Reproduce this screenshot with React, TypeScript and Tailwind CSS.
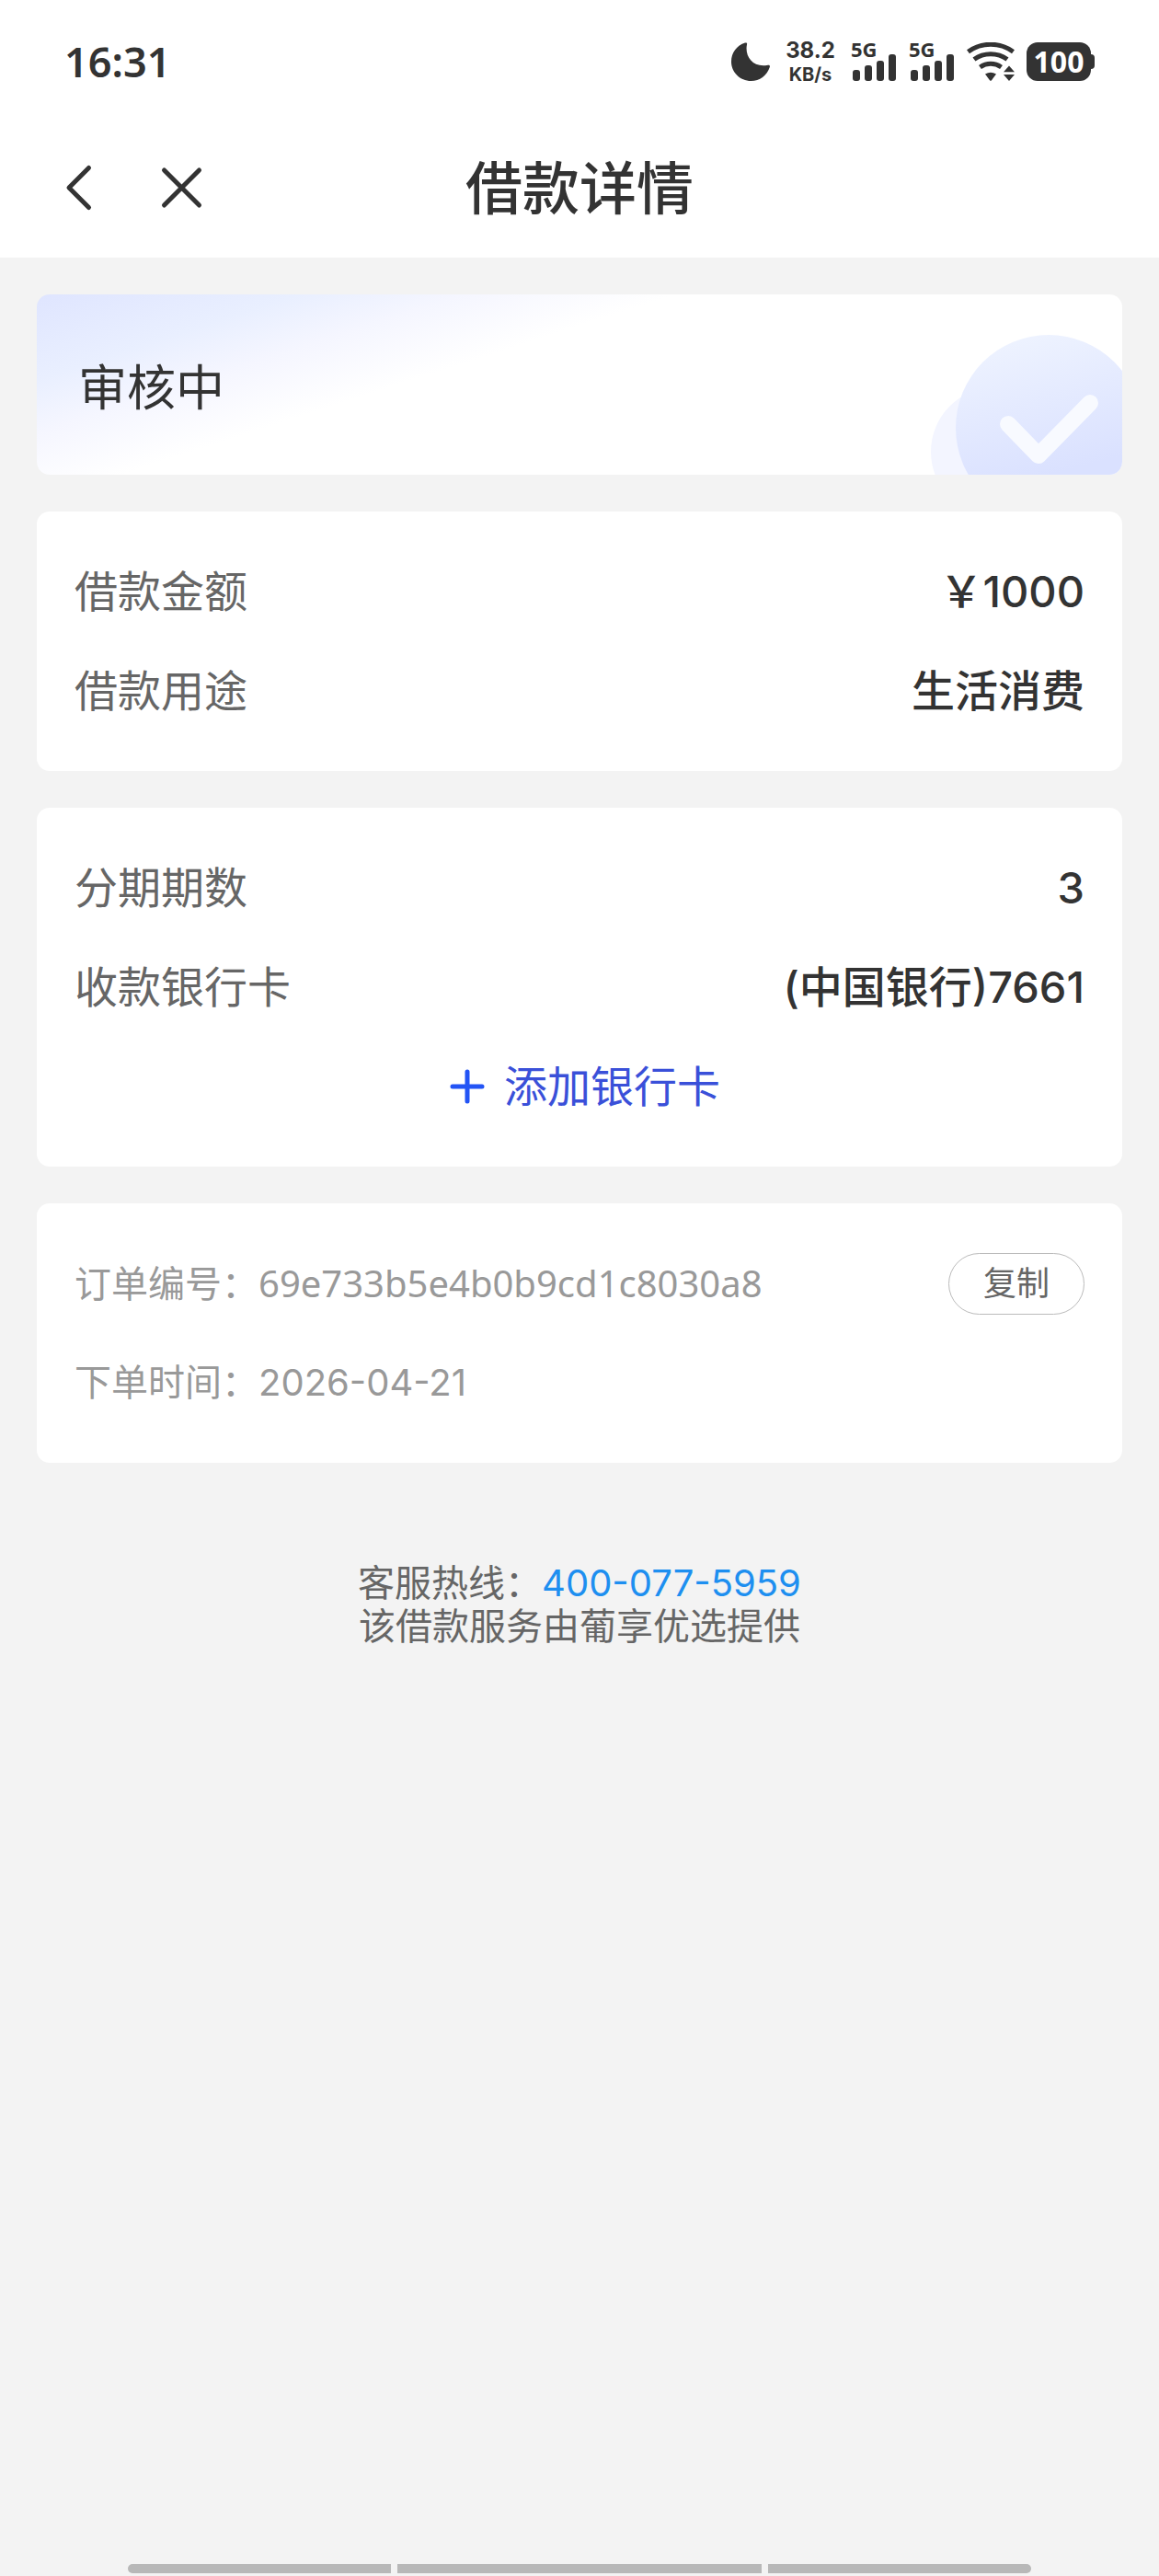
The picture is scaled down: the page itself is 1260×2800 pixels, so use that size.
import type { ReactNode } from "react";

const ORDER_ID = "69e733b5e4b0b9cd1c8030a8";

function MoonIcon() {
  return (
    <svg width="42" height="42" viewBox="0 0 42 42" fill="#333" aria-hidden="true">
      <path d="M15 .6C16.600 0 17.500.900 17 2.500C14.600 14 22 26.500 37 25.200C38 25.100 39 24.900 40 24.700C41.600 24.400 42.300 25.500 41.800 27C38.700 36 31 42 21.500 42C9.600 42 0 32.600 0 21C0 11.500 6 3.500 15 .6Z" />
    </svg>
  );
}

function SignalIcon() {
  return (
    <div className="relative h-[42px] w-[50px]">
      <span className="absolute -top-1 left-0 text-[22px] leading-[22px] font-bold">
        5G
      </span>
      <svg width="50" height="42" viewBox="0 0 50 42" fill="#333" aria-hidden="true">
        <rect x="2" y="30" width="8" height="12" rx="3" />
        <rect x="15" y="25" width="8" height="17" rx="3" />
        <rect x="28" y="20" width="8" height="22" rx="3" />
        <rect x="41" y="13" width="8" height="29" rx="3" />
      </svg>
    </div>
  );
}

function WifiIcon() {
  return (
    <svg width="52" height="42" viewBox="0 0 52 42" aria-hidden="true">
      <g fill="none" stroke="#333" strokeWidth="5">
        <path d="M1.500 10.200C16 -.4 36 -.4 50.500 10.200" />
        <path d="M8 18.600C18.500 10.800 33.500 10.800 44 18.600" />
        <path d="M14.500 27C21.500 22 30.500 22 37.500 27" />
      </g>
      <path d="M20 34.500Q26 31.200 32 34.500L26.800 41.400Q26 42.300 25.200 41.400Z" fill="#333" />
      <path d="M40 32.300L46 25.500L52 32.300ZM40 35L46 42L52 35Z" fill="#333" />
    </svg>
  );
}

function StatusBar() {
  return (
    <div className="flex h-[134px] items-center justify-between px-[70px] font-['Noto_Sans',sans-serif]">
      <time className="text-[45px] leading-[46px] font-semibold">16:31</time>
      <div className="flex items-center gap-[13px]">
        <MoonIcon />
        <div className="flex w-[62px] flex-col items-center font-['Inter',sans-serif] font-bold">
          <span className="text-[24px] leading-[28px]">38.2</span>
          <span className="text-[20px] leading-[24px]">KB/s</span>
        </div>
        <SignalIcon />
        <SignalIcon />
        <WifiIcon />
        <div className="flex items-center">
          <div className="flex h-[42px] w-[70px] items-center justify-center rounded-xl bg-[#333] text-[32px] leading-[32px] font-bold text-white">
            100
          </div>
          <div className="h-4 w-1 rounded-r-sm bg-[#333]" />
        </div>
      </div>
    </div>
  );
}

function NavBar() {
  return (
    <div className="grid h-[146px] grid-cols-[1fr_auto_1fr] items-center px-[60px] pb-[6px]">
      <div className="flex items-center gap-[54px]">
        <button type="button" aria-label="返回">
          <svg width="52" height="60" viewBox="0 0 52 60" fill="none" aria-hidden="true">
            <path
              d="M36.500 8.500L15 30L36.500 51.500"
              stroke="#333"
              strokeWidth="5"
              strokeLinecap="round"
              strokeLinejoin="round"
            />
          </svg>
        </button>
        <button type="button" aria-label="关闭">
          <svg width="60" height="60" viewBox="0 0 60 60" fill="none" aria-hidden="true">
            <path
              d="M12.500 11L50.500 49M50.500 11L12.500 49"
              stroke="#333"
              strokeWidth="5"
              strokeLinecap="round"
            />
          </svg>
        </button>
      </div>
      <h1 className="pt-1 text-[62px] leading-[80px] font-medium">借款详情</h1>
    </div>
  );
}

function StatusCard() {
  return (
    <section className="relative flex h-[196px] items-center overflow-hidden rounded-[14px] bg-[linear-gradient(162deg,#dfe5ff_0%,#e9efff_16%,#f5f6ff_26%,#ffffff_39%)] px-[45px] pt-2">
      <h2 className="text-[53px] leading-[60px]">审核中</h2>
      <svg
        className="absolute right-0 bottom-0"
        width="208"
        height="152"
        viewBox="0 0 208 152"
        fill="none"
        aria-hidden="true"
      >
        <defs>
          <linearGradient id="badge" x1="90" y1="0" x2="130" y2="152" gradientUnits="userSpaceOnUse">
            <stop stopColor="#eef3ff" />
            <stop offset="1" stopColor="#dae1ff" />
          </linearGradient>
        </defs>
        <circle cx="70" cy="127" r="70" fill="#f3f5ff" />
        <circle cx="128" cy="101" r="101" fill="url(#badge)" />
        <path
          d="M84 97L117 131L173 74"
          stroke="#f8faff"
          strokeWidth="18"
          strokeLinecap="round"
          strokeLinejoin="round"
        />
      </svg>
    </section>
  );
}

function Card({ children }: { children: ReactNode }) {
  return (
    <section className="rounded-[14px] bg-white px-[41px] py-[33px]">{children}</section>
  );
}

function Row({ label, children }: { label: string; children: ReactNode }) {
  return (
    <div className="flex h-27 items-center justify-between text-[47px] leading-[60px]">
      <dt className="text-[#666]">{label}</dt>
      <dd className="font-medium">{children}</dd>
    </div>
  );
}

export default function App() {
  return (
    <div className="flex min-h-screen flex-col bg-[#f3f3f3] font-['Inter','Noto_Sans_CJK_SC',sans-serif] text-[#333]">
      <header className="bg-white">
        <StatusBar />
        <NavBar />
      </header>

      <main className="flex flex-col gap-10 p-10">
        <StatusCard />

        <Card>
          <dl>
            <Row label="借款金额">￥1000</Row>
            <Row label="借款用途">生活消费</Row>
          </dl>
        </Card>

        <Card>
          <dl>
            <Row label="分期期数">3</Row>
            <Row label="收款银行卡">(中国银行)7661</Row>
          </dl>
          <button
            type="button"
            className="flex h-27 w-full items-center justify-center gap-[21px] pl-3 text-[47px] leading-[60px] text-[#3a50d9]"
          >
            <svg width="38" height="38" viewBox="0 0 38 38" fill="none" aria-hidden="true">
              <path
                d="M19 3V35M3 19H35"
                stroke="#2354f5"
                strokeWidth="5"
                strokeLinecap="round"
              />
            </svg>
            添加银行卡
          </button>
        </Card>

        <Card>
          <div className="text-[40px] leading-[48px] text-[#999]">
            <div className="flex h-27 items-center justify-between">
              <p className="font-['Noto_Sans','Noto_Sans_CJK_SC',sans-serif]">
                订单编号：{ORDER_ID}
              </p>
              <button
                type="button"
                onClick={() => navigator.clipboard?.writeText(ORDER_ID)}
                className="h-[67px] rounded-full border border-[#bbb] px-[37px] text-[36px] leading-[48px] text-[#666]"
              >
                复制
              </button>
            </div>
            <p className="flex h-27 items-center">下单时间：2026-04-21</p>
          </div>
        </Card>
      </main>

      <footer className="mt-[67px] text-center text-[40px] leading-[47px] text-[#666]">
        <p>
          客服热线：
          <a href="tel:400-077-5959" className="text-[#1e8ff0]">
            400-077-5959
          </a>
        </p>
        <p>该借款服务由葡享优选提供</p>
      </footer>

      <div className="mt-auto flex gap-[7px] px-[139px] pb-[3px]">
        <div className="h-[10px] flex-[286] rounded-l-full bg-[#b8b8b8]" />
        <div className="h-[10px] flex-[396] bg-[#b8b8b8]" />
        <div className="h-[10px] flex-[286] rounded-r-full bg-[#b8b8b8]" />
      </div>
    </div>
  );
}
